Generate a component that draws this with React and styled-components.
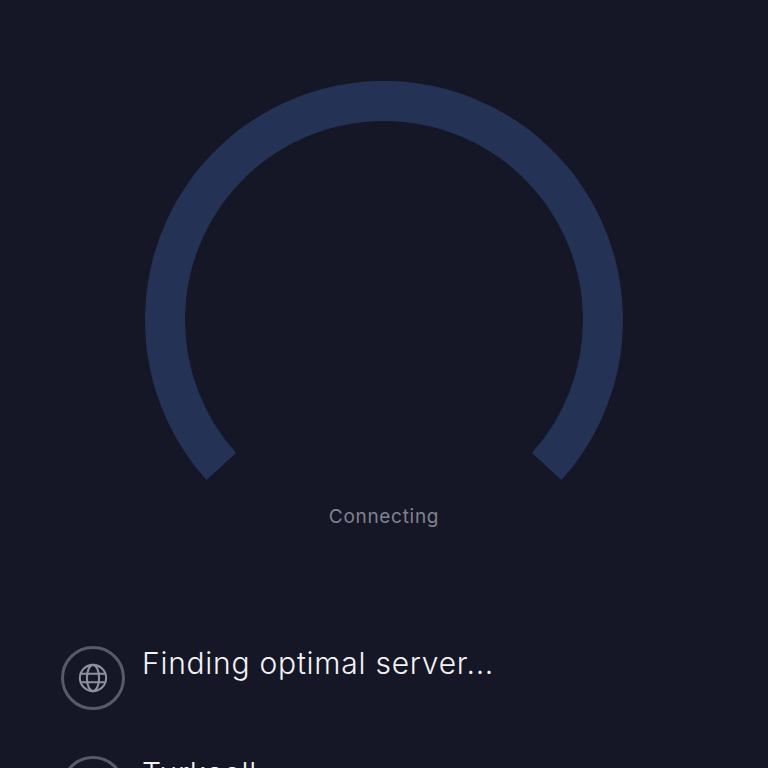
import React from "react";
import styled, { createGlobalStyle } from "styled-components";

const Global = createGlobalStyle`
  html, body { margin: 0; padding: 0; background: #151727; }
`;

const Screen = styled.div`
  width: 768px;
  height: 768px;
  overflow: hidden;
  background: #151727;
  display: flex;
  flex-direction: column;
  font-family: Inter, "Open Sans", sans-serif;
`;

const GaugeSection = styled.section`
  display: flex;
  flex-direction: column;
  align-items: center;
  padding-top: 81px;
`;

const GaugeSvg = styled.svg`
  display: block;
  width: 478px;
  height: 400px;
`;

const Status = styled.div`
  margin-top: 24px;
  height: 24px;
  line-height: 24px;
  font-size: 19px;
  letter-spacing: 0.7px;
  color: #808290;
`;

const StepList = styled.ul`
  list-style: none;
  margin: 117px 0 0;
  padding: 0 0 0 61px;
  display: flex;
  flex-direction: column;
  gap: 46px;
`;

const Step = styled.li`
  display: flex;
  align-items: flex-start;
  gap: 17px;
  height: 64px;
  flex: none;
`;

const IconRing = styled.div`
  width: 64px;
  height: 64px;
  box-sizing: border-box;
  flex: none;
  border: 3px solid #585a6c;
  border-radius: 50%;
  display: flex;
  align-items: center;
  justify-content: center;
  color: #8e90a0;
`;

const StepText = styled.div`
  font-size: 30px;
  line-height: 34px;
  letter-spacing: 0.75px;
  color: #f3f3f6;
  font-weight: 300;
`;

const Globe = () => (
  <svg width="30" height="30" viewBox="0 0 32 32" fill="none" stroke="currentColor" strokeWidth="2.2">
    <circle cx="16" cy="16" r="14" />
    <ellipse cx="16" cy="16" rx="6.5" ry="14" />
    <path d="M3.5 11.5H28.5M3.5 20.5H28.5" />
  </svg>
);

export default function App() {
  return (
    <Screen>
      <Global />
      <GaugeSection>
        <GaugeSvg viewBox="0 0 478 400">
          <path
            d="M76.3 385.5 A219 219 0 1 1 401.7 385.5"
            fill="none"
            stroke="#233255"
            strokeWidth="40"
          />
        </GaugeSvg>
        <Status>Connecting</Status>
      </GaugeSection>
      <StepList>
        <Step>
          <IconRing><Globe /></IconRing>
          <StepText>Finding optimal server...</StepText>
        </Step>
        <Step>
          <IconRing><Globe /></IconRing>
          <StepText>Turkcell</StepText>
        </Step>
      </StepList>
    </Screen>
  );
}
